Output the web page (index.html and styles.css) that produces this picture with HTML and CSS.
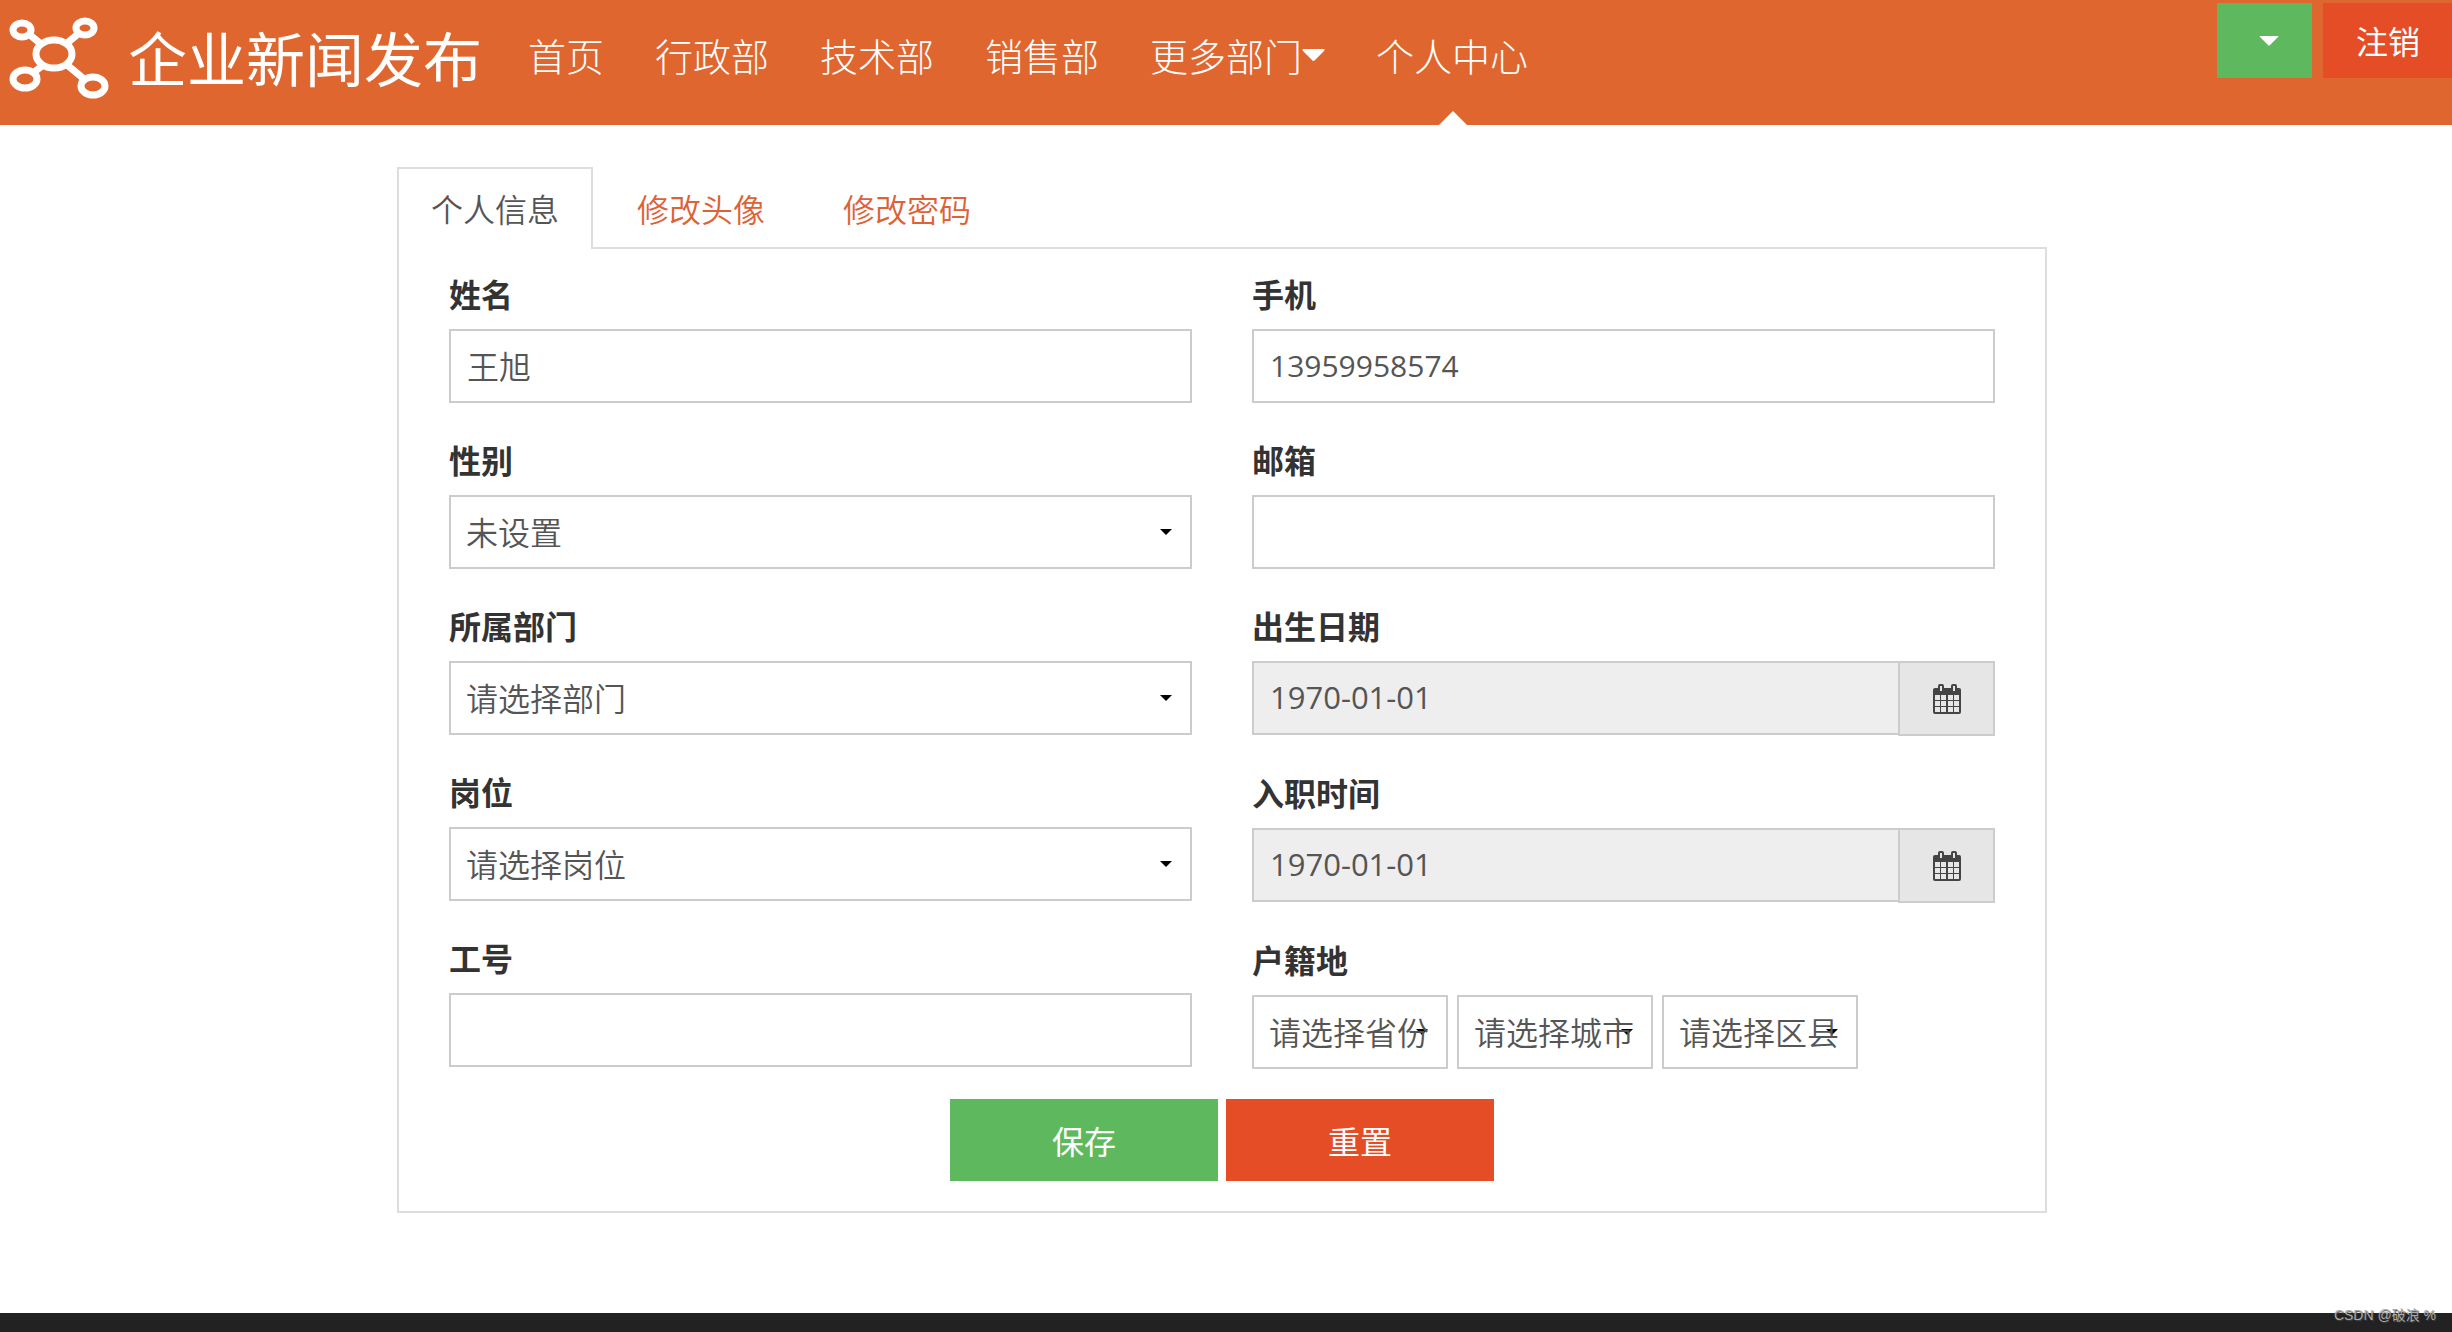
FILE: index.html
```html
<!DOCTYPE html>
<html lang="zh-CN">
<head>
<meta charset="utf-8">
<meta name="viewport" content="width=device-width, initial-scale=1">
<title>企业新闻发布</title>
<link rel="stylesheet" href="styles.css">
</head>
<body>
<header class="topbar">
  <a class="brand" href="#">
    <svg class="brand-mark" viewBox="0 0 120 125" aria-hidden="true">
      <g fill="none" stroke="#fff" stroke-width="7">
        <path d="M30 35 41 44M78 34 66 44M33 73 42 66M66 64 84 79"/>
        <ellipse cx="54" cy="54" rx="18" ry="14"/>
        <ellipse cx="22" cy="30" rx="9" ry="7"/>
        <ellipse cx="85" cy="28" rx="9" ry="7"/>
        <ellipse cx="25" cy="79" rx="12" ry="9"/>
        <ellipse cx="93" cy="86" rx="12" ry="9"/>
      </g>
    </svg>
    <span class="brand-name">企业新闻发布</span>
  </a>
  <nav class="nav">
    <a class="nav-link" href="#">首页</a>
    <a class="nav-link" href="#">行政部</a>
    <a class="nav-link" href="#">技术部</a>
    <a class="nav-link" href="#">销售部</a>
    <a class="nav-link" href="#">更多部门<svg class="nav-caret" viewBox="0 0 23 12" aria-hidden="true"><path fill="#fff" d="M1 0H22Q23 0 22 2L13 11Q11 13 10 11L1 2Q0 0 1 0Z"/></svg></a>
    <a class="nav-link is-active" href="#">个人中心</a>
  </nav>
  <div class="actions">
    <button class="btn-top btn-green" type="button" aria-label="更多"><svg class="btn-caret" viewBox="0 0 20 10" aria-hidden="true"><path fill="#fff" d="M1 0H19Q20 0 19 1L11 9Q10 10 9 9L1 1Q0 0 1 0Z"/></svg></button>
    <button class="btn-top btn-red" type="button">注销</button>
  </div>
</header>

<main class="page">
  <div class="profile">
    <nav class="tabs">
      <a class="tab is-active" href="#">个人信息</a>
      <a class="tab" href="#">修改头像</a>
      <a class="tab" href="#">修改密码</a>
    </nav>
    <form class="panel">
      <div class="columns">
        <div class="column">
          <div class="field"><label for="name">姓名</label><input class="control" id="name" type="text" value="王旭"></div>
          <div class="field"><label for="gender">性别</label><select class="control" id="gender"><option>未设置</option></select></div>
          <div class="field"><label for="dept">所属部门</label><select class="control" id="dept"><option>请选择部门</option></select></div>
          <div class="field"><label for="post">岗位</label><select class="control" id="post"><option>请选择岗位</option></select></div>
          <div class="field"><label for="number">工号</label><input class="control" id="number" type="text"></div>
        </div>
        <div class="column">
          <div class="field"><label for="phone">手机</label><input class="control digits" id="phone" type="tel" value="13959958574"></div>
          <div class="field"><label for="mail">邮箱</label><input class="control" id="mail" type="email"></div>
          <div class="field">
            <label for="birth">出生日期</label>
            <div class="date">
              <input class="control digits" id="birth" type="text" value="1970-01-01" readonly>
              <button class="date-button" type="button" aria-label="选择出生日期"><svg class="calendar" viewBox="0 0 30 32" aria-hidden="true"><rect x="1" y="5" width="28" height="26" rx="2" fill="#444"/><path fill="#e6e6e6" d="M3 12h5v5H3zM9 12h5v5H9zM16 12h5v5h-5zM22 12h5v5h-5zM3 18h5v5H3zM9 18h5v5H9zM16 18h5v5h-5zM22 18h5v5h-5zM3 24h5v5H3zM9 24h5v5H9zM16 24h5v5h-5zM22 24h5v5h-5z"/><rect x="7" y="2" width="4" height="7" rx="1" fill="#e6e6e6" stroke="#444" stroke-width="2"/><rect x="20" y="2" width="4" height="7" rx="1" fill="#e6e6e6" stroke="#444" stroke-width="2"/></svg></button>
            </div>
          </div>
          <div class="field">
            <label for="joined">入职时间</label>
            <div class="date">
              <input class="control digits" id="joined" type="text" value="1970-01-01" readonly>
              <button class="date-button" type="button" aria-label="选择入职时间"><svg class="calendar" viewBox="0 0 30 32" aria-hidden="true"><rect x="1" y="5" width="28" height="26" rx="2" fill="#444"/><path fill="#e6e6e6" d="M3 12h5v5H3zM9 12h5v5H9zM16 12h5v5h-5zM22 12h5v5h-5zM3 18h5v5H3zM9 18h5v5H9zM16 18h5v5h-5zM22 18h5v5h-5zM3 24h5v5H3zM9 24h5v5H9zM16 24h5v5h-5zM22 24h5v5h-5z"/><rect x="7" y="2" width="4" height="7" rx="1" fill="#e6e6e6" stroke="#444" stroke-width="2"/><rect x="20" y="2" width="4" height="7" rx="1" fill="#e6e6e6" stroke="#444" stroke-width="2"/></svg></button>
            </div>
          </div>
          <div class="field">
            <label for="province">户籍地</label>
            <div class="region">
              <select class="control" id="province"><option>请选择省份</option></select>
              <select class="control" aria-label="城市"><option>请选择城市</option></select>
              <select class="control" aria-label="区县"><option>请选择区县</option></select>
            </div>
          </div>
        </div>
      </div>
      <div class="submit">
        <button class="btn btn-green" type="submit">保存</button>
        <button class="btn btn-red" type="reset">重置</button>
      </div>
    </form>
  </div>
</main>
<footer class="footer"><span class="credit">CSDN @破浪 %</span></footer>
</body>
</html>
```
FILE: styles.css
```css
* { box-sizing: border-box; }

body {
  display: flex;
  flex-direction: column;
  min-height: 100vh;
  margin: 0;
  background: #fff;
  color: #333;
  font-family: "Noto Sans CJK SC", sans-serif;
  font-size: 32px;
  line-height: 48px;
}

a { text-decoration: none; }

button, input, select {
  margin: 0;
  border-radius: 0;
  font: inherit;
}

.topbar {
  display: flex;
  height: 125px;
  background: #e0662f;
}

.brand {
  display: flex;
  align-items: center;
  flex: none;
  gap: 8px;
  padding-right: 21px;
  color: #fff;
}
.brand-mark { width: 120px; height: 125px; }
.brand-name {
  padding-bottom: 12px;
  font-size: 59px;
  line-height: 80px;
  white-space: nowrap;
}

.nav { display: flex; }
.nav-link {
  position: relative;
  display: flex;
  align-items: center;
  padding: 0 26px 16px 25px;
  color: #fff;
  font-size: 38px;
  font-weight: 300;
  white-space: nowrap;
}
.nav-link.is-active::after {
  content: "";
  position: absolute;
  bottom: 0;
  left: 50%;
  margin-left: -14px;
  border: solid transparent;
  border-width: 0 14px 14px;
  border-bottom-color: #fff;
}
.nav-caret { width: 23px; height: 12px; }

.actions {
  display: flex;
  align-items: flex-start;
  gap: 11px;
  margin-left: auto;
  padding-top: 3px;
}
.btn-top {
  height: 75px;
  padding: 0 32px 2px 33px;
  border: 0;
  color: #fff;
}
.btn-top.btn-green { padding: 0 33px 0 42px; }
.btn-caret { display: block; width: 20px; height: 10px; }
.btn-green { background: #5eb95e; }
.btn-red { background: #e44d26; }

.page {
  flex: 1;
  padding: 42px 8px 100px 0;
}
.profile { max-width: 1650px; margin: 0 auto; }

.tabs { display: flex; gap: 10px; }
.tab {
  padding: 15px 32px;
  border: 2px solid transparent;
  border-bottom: 0;
  color: #dd6236;
  font-weight: 350;
  line-height: 48px;
}
.tab.is-active {
  position: relative;
  margin-bottom: -2px;
  padding-bottom: 16px;
  border-color: #ddd;
  background: #fff;
  color: #555;
}

.panel {
  padding: 20px 50px 30px;
  border: 2px solid #ddd;
}
.columns { display: grid; grid-template-columns: 1fr 1fr; gap: 60px; }
.column { display: flex; flex-direction: column; gap: 32px; }
.field { display: flex; flex-direction: column; gap: 12px; }
.field label { font-weight: 700; }

.control {
  width: 100%;
  height: 74px;
  padding: 0 16px 2px;
  border: 2px solid #ccc;
  background: #fff;
  color: #555;
  font-weight: 350;
}
.digits {
  font-family: "Open Sans", "Noto Sans CJK SC", sans-serif;
  font-size: 30px;
  font-weight: 400;
}
select.control {
  padding: 0 0 2px 15px;
  appearance: none;
  background: #fff url("data:image/svg+xml,%3Csvg xmlns='http://www.w3.org/2000/svg' width='12' height='6'%3E%3Cpath d='M0 0h12L6 6z'/%3E%3C/svg%3E") no-repeat right 18px center;
}

.date { display: flex; align-items: flex-start; }
.date .control {
  flex: 1;
  min-width: 0;
  border-right: 0;
  background: #eee;
  font-size: 31px;
}
.date-button {
  display: flex;
  align-items: center;
  justify-content: center;
  width: 97px;
  height: 75px;
  padding: 0;
  border: 2px solid #ccc;
  background: #e6e6e6;
}
.calendar { width: 30px; height: 32px; }

.region { display: flex; gap: 9px; }
.region .control { width: 196px; }

.submit {
  display: flex;
  justify-content: center;
  gap: 8px;
  padding-top: 30px;
}
.btn { width: 268px; height: 82px; border: 0; color: #fff; }

.footer { position: relative; height: 19px; background: #222; }
.credit {
  position: absolute;
  right: 16px;
  bottom: 9px;
  color: #aaa;
  font-family: "Liberation Sans", "Noto Sans CJK SC", sans-serif;
  font-size: 14px;
  line-height: 16px;
  text-shadow: 1px 1px 1px #444;
}
```
